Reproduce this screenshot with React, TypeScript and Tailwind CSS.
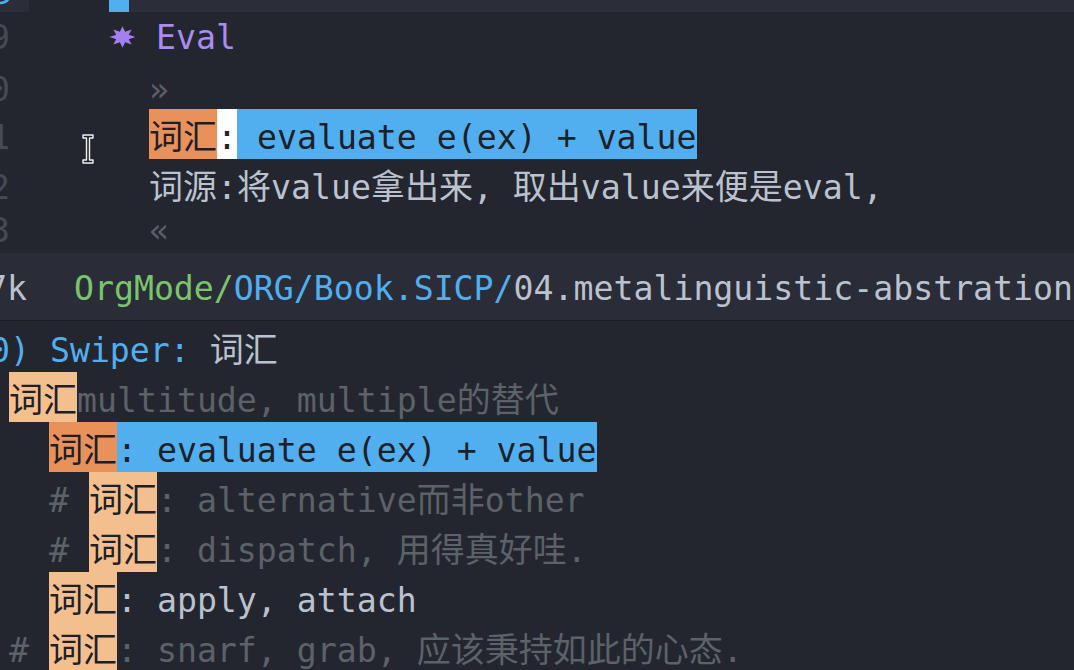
import React from "react";

const CJK_SPLIT = /([\u2E80-\u9FFF\uFF00-\uFFEF]+)/;
const CJK_TEST = /[\u2E80-\u9FFF\uFF00-\uFFEF]/;

function T({ s }: { s: string }) {
  return (
    <>
      {s.split(CJK_SPLIT).map((p, i) =>
        p === "" ? null : CJK_TEST.test(p) ? (
          <span key={i} className="text-[34px] leading-none">
            {p}
          </span>
        ) : (
          <span key={i}>{p}</span>
        )
      )}
    </>
  );
}

function Seg({ s, cls = "" }: { s: string; cls?: string }) {
  return (
    <span className={"whitespace-pre shrink-0 block " + cls}>
      <T s={s} />
    </span>
  );
}

function LineNo({ n }: { n: string }) {
  return (
    <span className="block shrink-0 w-[40px] ml-[-30px] text-right text-[#454a54]">{n}</span>
  );
}

function Star() {
  const pts: string[] = [];
  for (let i = 0; i < 16; i++) {
    const r = i % 2 === 0 ? 13 : 6.8;
    const a = (Math.PI / 8) * i - Math.PI / 2;
    pts.push(`${(13.5 + r * Math.cos(a)).toFixed(2)},${(11 + r * Math.sin(a) * 0.82).toFixed(2)}`);
  }
  return (
    <svg width="27" height="22" viewBox="0 0 27 22">
      <polygon points={pts.join(" ")} fill="#a47ff0" />
    </svg>
  );
}

function IBeam() {
  return (
    <svg width="12" height="30" viewBox="0 0 12 30" className="absolute left-[82px] top-[134px]">
      <path
        d="M1,1 H11 V4 H7.5 V26 H11 V29 H1 V26 H4.5 V4 H1 Z"
        fill="#1e2026"
        stroke="#f2f2f2"
        strokeWidth="1.4"
        strokeLinejoin="round"
      />
    </svg>
  );
}

export default function App() {
  return (
    <div className="relative w-[1074px] h-[670px] overflow-hidden bg-[#23262e] font-['DejaVu_Sans_Mono','Noto_Sans_CJK_SC',monospace] text-[33.2px] text-[#bbc2cf] flex flex-col">
      {/* top window */}
      <div className="h-[253px] shrink-0 flex flex-col overflow-hidden">
        <div className="h-[12px] shrink-0 flex">
          <div className="w-[29px] bg-[#2b2e38] overflow-hidden">
            <svg width="29" height="12" viewBox="0 0 29 12">
              <path d="M-1,3 Q5,3.5 8.5,-1" stroke="#51afef" strokeWidth="2.6" fill="none" />
            </svg>
          </div>
          <div className="w-[80px]" />
          <div className="w-[20px] bg-[#51afef]" />
          <div className="flex-1 bg-[#2b2e38]" />
        </div>

        <div className="h-[47px] shrink-0 flex leading-[51px] overflow-hidden">
          <LineNo n="39" />
          <span className="block w-[99px] shrink-0" />
          <span className="flex w-[27px] shrink-0 items-center justify-center pt-[2px]">
            <Star />
          </span>
          <span className="block w-[20px] shrink-0" />
          <Seg s="Eval" cls="text-[#a98cf0]" />
        </div>

        <div className="h-[50px] shrink-0 flex leading-[61px] overflow-hidden">
          <LineNo n="40" />
          <span className="block w-[139px] shrink-0" />
          <Seg s="»" cls="text-[#5b5f69]" />
        </div>

        <div className="h-[50px] shrink-0 flex leading-[58px] overflow-hidden">
          <LineNo n="41" />
          <span className="block w-[139px] shrink-0" />
          <Seg s="词汇" cls="bg-[#e8915a] text-[#1d2026]" />
          <Seg s=":" cls="bg-white text-[#1d2026]" />
          <Seg s=" evaluate e(ex) + value" cls="bg-[#51afef] text-[#1d2026]" />
        </div>

        <div className="h-[50px] shrink-0 flex leading-[57px] overflow-hidden">
          <LineNo n="42" />
          <span className="block w-[139px] shrink-0" />
          <Seg s="词源:将value拿出来, 取出value来便是eval," cls="text-[#bbc2cf]" />
        </div>

        <div className="h-[44px] shrink-0 flex leading-[44px] overflow-hidden">
          <LineNo n="43" />
          <span className="block w-[139px] shrink-0" />
          <Seg s="«" cls="text-[#5b5f69]" />
        </div>
      </div>

      {/* mode line */}
      <div className="h-[68px] shrink-0 flex items-center pt-[4px] bg-[#2a2d37] border-b border-[#1b1d22] leading-[50px] whitespace-pre overflow-hidden">
        <span className="block shrink-0 ml-[-13px] text-[#bbc2cf]">7k</span>
        <span className="block shrink-0 ml-[47px] text-[#7cc36e]">OrgMode/</span>
        <span className="block shrink-0 text-[#51afef]">ORG/Book.SICP/</span>
        <span className="block shrink-0 text-[#bbc2cf]">04.metalinguistic-abstration</span>
      </div>

      {/* bottom window */}
      <div className="flex-1 flex flex-col pt-[1px] overflow-hidden">
        <div className="h-[50px] shrink-0 flex leading-[57px] ml-[-30px] overflow-hidden">
          <Seg s="10) Swiper:" cls="text-[#51afef]" />
          <Seg s=" 词汇" cls="text-[#bbc2cf]" />
        </div>

        <div className="h-[50px] shrink-0 flex leading-[57px] pl-[9px] overflow-hidden">
          <Seg s="词汇" cls="bg-[#f4bf8f] text-[#1d2026]" />
          <Seg s="multitude, multiple的替代" cls="text-[#5b6268]" />
        </div>

        <div className="h-[50px] shrink-0 flex leading-[57px] pl-[9px] overflow-hidden">
          <Seg s="  " />
          <Seg s="词汇" cls="bg-[#e8915a] text-[#1d2026]" />
          <Seg s=": evaluate e(ex) + value" cls="bg-[#51afef] text-[#1d2026]" />
        </div>

        <div className="h-[50px] shrink-0 flex leading-[57px] pl-[9px] overflow-hidden">
          <Seg s="  # " cls="text-[#5b6268]" />
          <Seg s="词汇" cls="bg-[#f4bf8f] text-[#1d2026]" />
          <Seg s=": alternative而非other" cls="text-[#5b6268]" />
        </div>

        <div className="h-[50px] shrink-0 flex leading-[57px] pl-[9px] overflow-hidden">
          <Seg s="  # " cls="text-[#5b6268]" />
          <Seg s="词汇" cls="bg-[#f4bf8f] text-[#1d2026]" />
          <Seg s=": dispatch, 用得真好哇." cls="text-[#5b6268]" />
        </div>

        <div className="h-[50px] shrink-0 flex leading-[57px] pl-[9px] overflow-hidden">
          <Seg s="  " />
          <Seg s="词汇" cls="bg-[#f4bf8f] text-[#1d2026]" />
          <Seg s=": apply, attach" cls="text-[#bbc2cf]" />
        </div>

        <div className="h-[50px] shrink-0 flex leading-[57px] pl-[9px] overflow-hidden">
          <Seg s="# " cls="text-[#5b6268]" />
          <Seg s="词汇" cls="bg-[#f4bf8f] text-[#1d2026]" />
          <Seg s=": snarf, grab, 应该秉持如此的心态." cls="text-[#5b6268]" />
        </div>
      </div>

      <IBeam />
    </div>
  );
}
